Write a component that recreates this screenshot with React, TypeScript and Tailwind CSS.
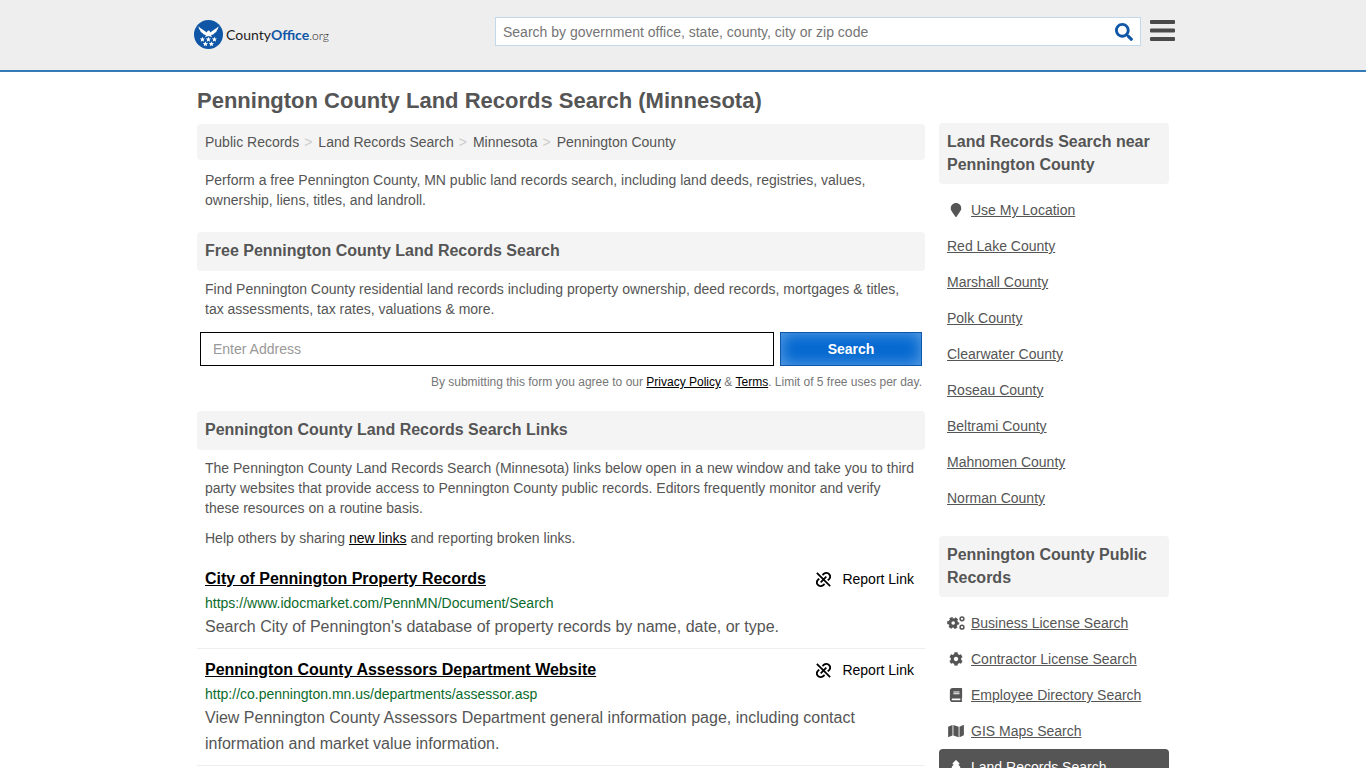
import type { ComponentType } from "react";
import { FaBook, FaCog, FaMap, FaMapMarker, FaSearch, FaTree } from "react-icons/fa";

type IconProps = { className?: string; size?: number };
type SideItem = { label: string; icon?: ComponentType<IconProps>; active?: boolean };

function GearsIcon({ className, size = 14 }: IconProps) {
  return (
    <svg viewBox="0 0 18 14" height={size} className={className} fill="none" stroke="currentColor" aria-hidden="true">
      <circle cx="6.2" cy="7" r="3.3" strokeWidth="3" />
      <circle cx="6.2" cy="7" r="5.1" strokeWidth="1.9" strokeDasharray="3.1 2.24" strokeDashoffset="1.55" />
      <circle cx="15" cy="2.8" r="1.9" strokeWidth="1.5" />
      <circle cx="15" cy="11.2" r="1.9" strokeWidth="1.5" />
    </svg>
  );
}

function BrokenLinkIcon() {
  return (
    <svg viewBox="0 0 14 14" className="size-[15px]" fill="none" stroke="currentColor" strokeWidth="1.7" aria-hidden="true">
      <path d="M0.8 0.8 L13.2 13.2" />
      <path d="M6 2.8 L7.4 1.7 C8.8 0.6 11 0.7 12.2 2 C13.4 3.3 13.4 5.3 12.2 6.6 L11 7.8" />
      <path d="M9.6 4.4 L4.4 9.6" />
      <path d="M3 6.2 L1.8 7.4 C0.6 8.7 0.6 10.7 1.8 12 C3 13.3 5.2 13.4 6.6 12.3 L8 11.2" />
    </svg>
  );
}

const crumbs = ["Public Records", "Land Records Search", "Minnesota", "Pennington County"];

const nearby: SideItem[] = [
  { label: "Use My Location", icon: FaMapMarker },
  { label: "Red Lake County" },
  { label: "Marshall County" },
  { label: "Polk County" },
  { label: "Clearwater County" },
  { label: "Roseau County" },
  { label: "Beltrami County" },
  { label: "Mahnomen County" },
  { label: "Norman County" },
];

const publicRecords: SideItem[] = [
  { label: "Business License Search", icon: GearsIcon },
  { label: "Contractor License Search", icon: FaCog },
  { label: "Employee Directory Search", icon: FaBook },
  { label: "GIS Maps Search", icon: FaMap },
  { label: "Land Records Search", icon: FaTree, active: true },
];

const resources = [
  {
    title: "City of Pennington Property Records",
    url: "https://www.idocmarket.com/PennMN/Document/Search",
    text: "Search City of Pennington's database of property records by name, date, or type.",
  },
  {
    title: "Pennington County Assessors Department Website",
    url: "http://co.pennington.mn.us/departments/assessor.asp",
    text: "View Pennington County Assessors Department general information page, including contact information and market value information.",
  },
];

const star = "M0 -2.6 L0.8 -0.9 L2.6 -0.8 L1.2 0.4 L1.6 2.3 L0 1.3 L-1.6 2.3 L-1.2 0.4 L-2.6 -0.8 L-0.8 -0.9 Z";
const stars = [[8.4, 19.4], [14.4, 19.4], [20.4, 19.4], [11.4, 24], [17.4, 24]];

function Logo() {
  return (
    <a href="#" className="-ml-[3px] flex items-center gap-[3px] whitespace-nowrap font-[Lato,sans-serif] text-sm leading-5 text-[#222]">
      <svg viewBox="0 0 29 29" className="size-[29px] shrink-0" aria-hidden="true">
        <circle cx="14.5" cy="14.5" r="14.5" fill="#0f57a6" />
        <path fill="#fff" d="M4.6 6.2 C6.5 8.8 9.2 9.4 11.4 11.4 L13 12.6 L13.4 11 L15 10.6 L16 11.6 L16.2 12.6 L17.6 11.4 C19.8 9.4 22.5 8.8 24.4 6.2 C24.5 8 23.9 9.3 22.9 10.2 C22.6 11.5 21.8 12.5 20.6 13 C19.9 14.2 18.6 14.9 17 14.9 L18 17 L14.5 16 L11 17 L12 14.9 C10.4 14.9 9.1 14.2 8.4 13 C7.2 12.5 6.4 11.5 6.1 10.2 C5.1 9.3 4.5 8 4.6 6.2 Z" />
        {stars.map(([x, y]) => <path key={`${x}-${y}`} d={star} transform={`translate(${x} ${y})`} fill="#fff" />)}
      </svg>
      <span>County<b className="text-[#0f57a6]">Office</b><span className="text-xs font-light">.org</span></span>
    </a>
  );
}

function SectionHeading({ children }: { children: string }) {
  return <h2 className="rounded bg-[#f4f4f4] px-2 pt-[7px] pb-[9px] text-base leading-[23px] font-bold">{children}</h2>;
}

function SideList({ title, items }: { title: string; items: SideItem[] }) {
  return (
    <section>
      <h2 className="rounded bg-[#f4f4f4] px-2 pt-[7px] pb-2 text-base leading-[23px] font-bold">{title}</h2>
      <ul className="mt-2">
        {items.map(({ label, icon: Icon, active }) => (
          <li key={label}>
            <a href="#" className={`flex h-9 items-center gap-1.5 rounded px-2 ${active ? "bg-[#555] text-white" : ""}`}>
              {Icon ? <Icon className="w-[18px] shrink-0" size={14} /> : null}
              <span className="underline underline-offset-1">{label}</span>
            </a>
          </li>
        ))}
      </ul>
    </section>
  );
}

export default function App() {
  return (
    <div className="bg-white font-['Liberation_Sans',Arial,sans-serif] text-sm leading-5 text-[#555]">
      <header className="border-b-2 border-[#337ab7] bg-[#eee]">
        <div className="mx-auto flex h-[70px] max-w-[972px] items-start">
          <div className="w-[298px] pt-5">
            <Logo />
          </div>
          <form className="mt-[17px] flex h-[29px] flex-1 border border-[#c3d9ea] bg-white" onSubmit={(e) => e.preventDefault()}>
            <input aria-label="Search" placeholder="Search by government office, state, county, city or zip code" className="min-w-0 flex-1 px-[7px] outline-none placeholder:text-[#757575]" />
            <button type="submit" aria-label="Search" className="px-[7px] text-[#0f57a6]">
              <FaSearch size={18} />
            </button>
          </form>
          <button type="button" aria-label="Menu" className="mt-5 -mr-1.5 ml-[9px] text-[#4a4a4a]">
            <svg viewBox="0 0 25 21" className="h-[21px] w-[25px]" fill="currentColor" aria-hidden="true">
              <rect width="25" height="4" rx="1" />
              <rect y="8.5" width="25" height="4" rx="1" />
              <rect y="17" width="25" height="4" rx="1" />
            </svg>
          </button>
        </div>
      </header>

      <div className="mx-auto flex max-w-[972px] items-start gap-[14px]">
        <main className="min-w-0 flex-1">
          <h1 className="pt-[17px] pb-[11px] text-[22px] leading-6 font-bold">Pennington County Land Records Search (Minnesota)</h1>
          <nav aria-label="Breadcrumb" className="rounded bg-[#f4f4f4] px-2 py-2">
            <ol className="flex">
              {crumbs.map((crumb, i) => (
                <li key={crumb}>
                  {i > 0 ? <span className="pr-1.5 pl-[5px] text-[#ccc]">&gt;</span> : null}
                  <a href="#">{crumb}</a>
                </li>
              ))}
            </ol>
          </nav>
          <p className="px-2 pt-[10px] pb-[22px]">
            Perform a free Pennington County, MN public land records search, including land deeds, registries, values, ownership, liens, titles, and landroll.
          </p>

          <SectionHeading>Free Pennington County Land Records Search</SectionHeading>
          <p className="px-2 pt-2 pb-[13px]">
            Find Pennington County residential land records including property ownership, deed records, mortgages &amp; titles, tax assessments, tax rates, valuations &amp; more.
          </p>
          <form className="flex gap-1.5 px-[3px]" onSubmit={(e) => e.preventDefault()}>
            <input aria-label="Address" placeholder="Enter Address" className="h-[34px] min-w-0 flex-1 border border-black px-3 outline-none placeholder:text-[#999]" />
            <button type="submit" className="h-[34px] w-[142px] border border-[#0d57a8] bg-[#0468d0] font-bold text-white shadow-[inset_0_0_16px_#64a4e4]">Search</button>
          </form>
          <p className="px-[3px] pt-1.5 pb-[19px] text-right text-xs leading-5 text-[#777]">
            By submitting this form you agree to our <a href="#" className="text-black underline underline-offset-1">Privacy Policy</a> &amp; <a href="#" className="text-black underline underline-offset-1">Terms</a>. Limit of 5 free uses per day.
          </p>

          <SectionHeading>Pennington County Land Records Search Links</SectionHeading>
          <p className="px-2 pt-2 pb-[10px]">
            The Pennington County Land Records Search (Minnesota) links below open in a new window and take you to third party websites that provide access to Pennington County public records. Editors frequently monitor and verify these resources on a routine basis.
          </p>
          <p className="px-2 pb-[10px]">
            Help others by sharing <a href="#" className="text-black underline underline-offset-1">new links</a> and reporting broken links.
          </p>

          {resources.map((item) => (
            <article key={item.title} className="border-b border-[#eee] px-2 pt-2 pb-2">
              <div className="flex items-center justify-between">
                <h3 className="text-base leading-[26px] font-bold text-black">
                  <a href="#" className="underline underline-offset-1">{item.title}</a>
                </h3>
                <a href="#" className="mr-[3px] flex items-center gap-[11px] text-black">
                  <BrokenLinkIcon />
                  Report Link
                </a>
              </div>
              <a href="#" className="block leading-[22px] text-[#0b6b2b]">{item.url}</a>
              <p className="text-base leading-[26px]">{item.text}</p>
            </article>
          ))}
        </main>

        <aside className="w-[230px] shrink-0 space-y-5 pt-[51px]">
          <SideList title="Land Records Search near Pennington County" items={nearby} />
          <SideList title="Pennington County Public Records" items={publicRecords} />
        </aside>
      </div>
    </div>
  );
}
